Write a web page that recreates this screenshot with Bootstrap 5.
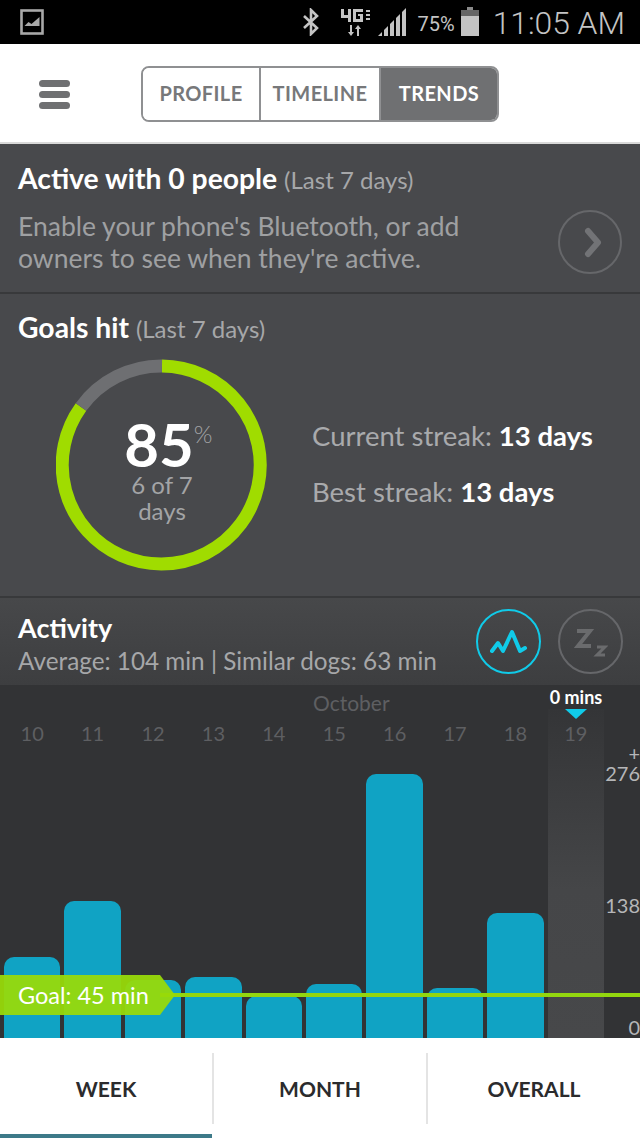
<!DOCTYPE html>
<html lang="en">
<head>
<meta charset="UTF-8">
<meta name="viewport" content="width=device-width, initial-scale=1.0">
<title>Trends</title>
<link href="https://cdn.jsdelivr.net/npm/bootstrap@5.3.0/dist/css/bootstrap.min.css" rel="stylesheet">
<style>
    html, body { height: 100%; }
    body { font-family: Lato, "Open Sans", sans-serif; background: #48494c; overflow: hidden; }
    .phone { width: 640px; height: 1138px; }

    /* status bar */
    .status-bar { height: 44px; background: #000; padding: 0 15px 0 20px; }
    .status-time { font-family: Roboto, sans-serif; font-size: 31.8px; font-weight: 300; color: #c4c4c4; line-height: 1; margin: 4px 0 0 14px; }
    .status-pct { font-family: Roboto, sans-serif; font-size: 20px; color: #c4c4c4; margin: 4px 6px 0 12px; }
    .ico-lte { margin: 0 7px 0 20px; }

    /* top header */
    .top-head { height: 100px; background: #fff; padding: 2px 0 0 39px; border-bottom: 2px solid #d9d9d9; }
    .burger { width: 31px; margin-right: 71px; }
    .burger span { display: block; height: 7px; border-radius: 4px; background: #6f7072; margin-bottom: 4px; }
    .seg-group { border: 2px solid #8f9092; border-radius: 8px; overflow: hidden; height: 56px; }
    .seg-btn { height: 100%; padding-bottom: 2px; display: flex; align-items: center; justify-content: center; font-size: 20px; font-weight: 700; letter-spacing: .4px; color: #77787a; background: #fff; }
    .seg-btn + .seg-btn { border-left: 2px solid #8f9092; }
    .seg-one { width: 116px; }
    .seg-two { width: 120px; }
    .seg-three { width: 118px; background: #6f7072; color: #fff; }

    /* sections */
    .pane { background: #48494c; border-bottom: 2px solid #38393b; padding-left: 18px; }
    .pane-title { font-size: 28.3px; font-weight: 700; color: #fff; line-height: 1; }
    .pane-title small { font-size: 24px; font-weight: 400; color: #a6a7a9; }
    .pane-active { height: 150px; padding-top: 20px; }
    .active-copy { font-size: 26.5px; line-height: 31.5px; color: #9fa0a2; margin-top: 19px; }
    .chevron-btn { margin: 45px 17px 0 0; }
    .pane-goals { height: 304px; padding-top: 19px; }
    .streak-col { margin-left: 44px; padding-top: 15px; }
    .streak { font-size: 27.5px; color: #a9aaac; line-height: 1; margin-bottom: 28px; }
    .streak b { color: #fff; font-weight: 700; }
    .ring-box { width: 212px; height: 212px; margin: 18px 0 0 38px; position: relative; }
    .ring-text { position: absolute; inset: 0; padding-top: 60px; text-align: center; color: #a3a4a6; font-size: 24px; line-height: 26px; }
    .ring-num { display: inline-block; font-size: 60px; font-weight: 700; color: #fff; line-height: 50px; position: relative; margin: 0 0 3px -6px; }
    .ring-num sup { position: absolute; top: 3px; left: 100%; font-size: 24px; font-weight: 300; color: #a3a4a6; line-height: 1; }
    .pane-activity { height: 87px; padding-top: 16px; background: linear-gradient(#47484a, #3d3e40); border-bottom: 0; }
    .pane-activity .pane-title { font-size: 27px; }
    .activity-sub { font-size: 24.3px; color: #a6a7a9; line-height: 1; margin-top: 8px; }
    .round-pair { gap: 17px; margin: -5px 17px 0 0; }
    .round-btn { width: 65px; height: 65px; border-radius: 50%; border: 2px solid #66676a; }
    .round-on { border-color: #10cbe9; }

    /* chart */
    .chart { height: 353px; background: #323335; position: relative; }
    .chart-month { height: 36px; padding: 7px 0 0 313px; font-size: 21px; line-height: 1; color: #5e5f62; }
    .chart-mins { position: absolute; top: 3px; left: 536px; width: 80px; text-align: center; color: #fff; font-size: 18px; font-weight: 700; line-height: 1; }
    .chart-tick { position: absolute; top: 24px; left: 565px; width: 22px; height: 10px; }
    .chart-cols { position: absolute; left: 4px; top: 24px; width: 600px; height: 329px; gap: 4px; }
    .day-col { flex: 1 1 0; position: relative; display: flex; flex-direction: column; justify-content: flex-end; }
    .day-col span { position: absolute; top: 14px; left: 0; right: 0; text-align: center; font-size: 20px; line-height: 1; color: #5e5f62; }
    .day-bar { background: #10a3c4; border-radius: 10px 10px 0 0; }
    .day-now { background: linear-gradient(#343537, #454648 55%, #47484a); }
    .y-label { position: absolute; right: 0; font-size: 20px; line-height: 1; color: #b5b6b8; }
    .y-plus { top: 58px; }
    .y-top { top: 78px; }
    .y-mid { top: 210px; }
    .y-zero { top: 332px; }
    .goal-line { position: absolute; left: 160px; right: 0; top: 308px; height: 4px; background: #93d60f; }
    .goal-flag { position: absolute; left: 0; top: 290px; width: 175px; height: 40px; background: rgba(152, 218, 8, .94); clip-path: polygon(0 0, 160px 0, 175px 50%, 160px 100%, 0 100%); color: #fff; font-size: 23.5px; line-height: 40px; padding-left: 18px; }

    /* bottom tabs */
    .tabs-row { height: 100px; background: #fff; position: relative; }
    .tab-item { flex: 1 1 0; display: flex; align-items: center; justify-content: center; font-size: 21px; font-weight: 700; color: #2b2b2d; height: 71px; margin-top: 15px; }
    .tab-item + .tab-item { border-left: 2px solid #e4e4e4; }
    .tab-mark { position: absolute; left: 0; bottom: 0; width: 212px; height: 4px; background: #3d7a89; }
</style>
</head>
<body>
<div class="phone d-flex flex-column">

    <!-- Status bar -->
    <div class="status-bar d-flex align-items-center">
        <svg width="24" height="26" viewBox="0 0 24 26" fill="none"><rect x="1.5" y="1.5" width="21" height="23" stroke="#a8a8a8" stroke-width="2.6"/><path d="M4.5 17l4-4 3 2 8-7v9z" fill="#a8a8a8"/></svg>
        <div class="ms-auto d-flex align-items-center">
            <svg width="18" height="28" viewBox="0 0 18 28" fill="none" stroke="#c4c4c4" stroke-width="2.6"><path d="M2 8l13 12-6 6V2l6 6L2 20"/></svg>
            <svg class="ico-lte" width="31" height="30" viewBox="0 0 31 30" fill="#c4c4c4"><path d="M1 2h3v6h4V2h3v13H8v-4H1zM13 2h10v3h-7v7h4V9h-2V7h5v8H13zM26 3h4v2h-4zM26 7h4v2h-4zM26 11h4v2h-4z"/><path d="M10 18h2v7h2l-3 4-3-4h2zM19 29h-2v-7h-2l3-4 3 4h-2z"/></svg>
            <svg width="28" height="30" viewBox="0 0 28 30" fill="#c4c4c4"><path d="M0 29l4-4v4zM6 29v-6l4-4v10zM12 29V17l4-4v16zM18 29V11l4-4v22zM24 29V5l4-4v28z"/></svg>
            <span class="status-pct">75%</span>
            <svg width="18" height="30" viewBox="0 0 18 30"><path d="M6 0h6v3H6z" fill="#8a8a8a"/><path d="M0 3h18v6H0z" fill="#666"/><path d="M0 9h18v20H0z" fill="#c4c4c4"/></svg>
            <span class="status-time">11:05 AM</span>
        </div>
    </div>

    <!-- Header with view switch -->
    <div class="top-head d-flex align-items-center">
        <div class="burger"><span></span><span></span><span class="mb-0"></span></div>
        <div class="seg-group d-flex">
            <div class="seg-btn seg-one">PROFILE</div>
            <div class="seg-btn seg-two">TIMELINE</div>
            <div class="seg-btn seg-three">TRENDS</div>
        </div>
    </div>

    <!-- Active with -->
    <div class="pane pane-active d-flex">
        <div class="flex-grow-1">
            <div class="pane-title">Active with 0 people <small>(Last 7 days)</small></div>
            <div class="active-copy">Enable your phone's Bluetooth, or add<br>owners to see when they're active.</div>
        </div>
        <svg class="chevron-btn" width="66" height="66" viewBox="0 0 66 66" fill="none"><circle cx="33" cy="33" r="31" stroke="#66676a" stroke-width="2"/><path d="M31 22l10 11.5L31 45" stroke="#727376" stroke-width="6" stroke-linecap="round" stroke-linejoin="round"/></svg>
    </div>

    <!-- Goals hit -->
    <div class="pane pane-goals">
        <div class="pane-title">Goals hit <small>(Last 7 days)</small></div>
        <div class="d-flex">
            <div class="ring-box">
                <svg width="212" height="212" viewBox="0 0 212 212" fill="none" stroke-width="13">
                    <path d="M106 7A99 99 0 1 1 25 48" stroke="#a0dc00"/>
                    <path d="M106 7A99 99 0 0 0 25 48" stroke="#6e6f72"/>
                </svg>
                <div class="ring-text">
                    <div class="ring-num">85<sup>%</sup></div>
                    <div>6 of 7<br>days</div>
                </div>
            </div>
            <div class="streak-col d-flex flex-column justify-content-center">
                <div class="streak">Current streak: <b>13 days</b></div>
                <div class="streak mb-0">Best streak: <b>13 days</b></div>
            </div>
        </div>
    </div>

    <!-- Activity -->
    <div class="pane pane-activity d-flex">
        <div class="flex-grow-1">
            <div class="pane-title">Activity</div>
            <div class="activity-sub">Average: 104 min | Similar dogs: 63 min</div>
        </div>
        <div class="round-pair d-flex">
            <div class="round-btn round-on d-flex align-items-center justify-content-center">
                <svg width="38" height="30" viewBox="0 0 38 30" fill="none" stroke="#10cbe9" stroke-width="4" stroke-linecap="round" stroke-linejoin="round"><path d="M2 24l6-8 5 8 9-19 8 19 5-3"/></svg>
            </div>
            <div class="round-btn d-flex align-items-center justify-content-center">
                <svg width="34" height="34" viewBox="0 0 34 34" fill="none" stroke="#6a6b6d" stroke-width="4"><path d="M3 6h13L4 21h13"/><path d="M23 22h8l-8 8h8" stroke-width="3"/></svg>
            </div>
        </div>
    </div>

    <!-- Week chart -->
    <div class="chart">
        <div class="chart-month">October</div>
        <div class="chart-cols d-flex" id="chartCols"></div>
        <div class="chart-mins">0 mins</div>
        <svg class="chart-tick" viewBox="0 0 22 10"><path d="M0 0h22L11 10z" fill="#10cbe9"/></svg>
        <div class="y-label y-plus">+</div>
        <div class="y-label y-top">276</div>
        <div class="y-label y-mid">138</div>
        <div class="y-label y-zero">0</div>
        <div class="goal-line"></div>
        <div class="goal-flag">Goal: 45 min</div>
    </div>

    <!-- Range tabs -->
    <div class="tabs-row d-flex">
        <div class="tab-item">WEEK</div>
        <div class="tab-item">MONTH</div>
        <div class="tab-item">OVERALL</div>
        <div class="tab-mark"></div>
    </div>
</div>

<script src="https://cdn.jsdelivr.net/npm/bootstrap@5.3.0/dist/js/bootstrap.bundle.min.js"></script>
<script>
    const days = [[10, 81], [11, 137], [12, 58], [13, 61], [14, 42], [15, 54], [16, 264], [17, 50], [18, 125], [19, 0]];
    document.getElementById('chartCols').innerHTML = days.map(d => `
        <div class="day-col ${d[1] ? '' : 'day-now'}">
            <span>${d[0]}</span>
            <div class="day-bar" style="height:${d[1]}px"></div>
        </div>`).join('');
</script>
</body>
</html>
